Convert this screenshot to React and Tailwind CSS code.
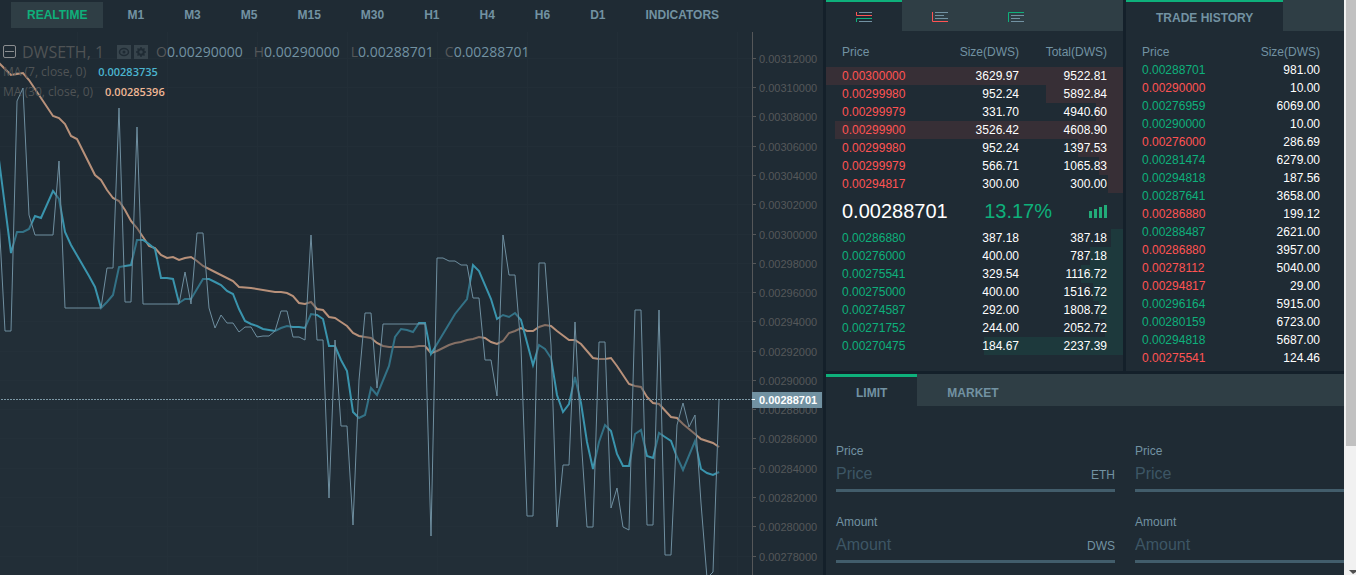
import { useState } from "react"

const intervals = ['REALTIME', 'M1', 'M3', 'M5', 'M15', 'M30', 'H1', 'H4', 'H6', 'D1', 'INDICATORS']

const asks = [
    { price: '0.00300000', size: '3629.97', total: '9522.81', depth: 100 },
    { price: '0.00299980', size: '952.24', total: '5892.84', depth: 26 },
    { price: '0.00299979', size: '331.70', total: '4940.60', depth: 9 },
    { price: '0.00299900', size: '3526.42', total: '4608.90', depth: 97 },
    { price: '0.00299980', size: '952.24', total: '1397.53', depth: 15 },
    { price: '0.00299979', size: '566.71', total: '1065.83', depth: 8 },
    { price: '0.00294817', size: '300.00', total: '300.00', depth: 5 },
]

const bids = [
    { price: '0.00286880', size: '387.18', total: '387.18', depth: 4 },
    { price: '0.00276000', size: '400.00', total: '787.18', depth: 11 },
    { price: '0.00275541', size: '329.54', total: '1116.72', depth: 14 },
    { price: '0.00275000', size: '400.00', total: '1516.72', depth: 10 },
    { price: '0.00274587', size: '292.00', total: '1808.72', depth: 8 },
    { price: '0.00271752', size: '244.00', total: '2052.72', depth: 6 },
    { price: '0.00270475', size: '184.67', total: '2237.39', depth: 47 },
]

const trades = [
    { price: '0.00288701', size: '981.00', up: true },
    { price: '0.00290000', size: '10.00', up: false },
    { price: '0.00276959', size: '6069.00', up: true },
    { price: '0.00290000', size: '10.00', up: true },
    { price: '0.00276000', size: '286.69', up: false },
    { price: '0.00281474', size: '6279.00', up: true },
    { price: '0.00294818', size: '187.56', up: true },
    { price: '0.00287641', size: '3658.00', up: true },
    { price: '0.00286880', size: '199.12', up: false },
    { price: '0.00288487', size: '2621.00', up: true },
    { price: '0.00286880', size: '3957.00', up: false },
    { price: '0.00278112', size: '5040.00', up: false },
    { price: '0.00294817', size: '29.00', up: false },
    { price: '0.00296164', size: '5915.00', up: true },
    { price: '0.00280159', size: '6723.00', up: true },
    { price: '0.00294818', size: '5687.00', up: true },
    { price: '0.00275541', size: '124.46', up: false },
]

const ticks = [
    { y: 59, label: '0.00312000' },
    { y: 88, label: '0.00310000' },
    { y: 117, label: '0.00308000' },
    { y: 147, label: '0.00306000' },
    { y: 176, label: '0.00304000' },
    { y: 205, label: '0.00302000' },
    { y: 235, label: '0.00300000' },
    { y: 264, label: '0.00298000' },
    { y: 293, label: '0.00296000' },
    { y: 322, label: '0.00294000' },
    { y: 352, label: '0.00292000' },
    { y: 381, label: '0.00290000' },
    { y: 410, label: '0.00288000' },
    { y: 439, label: '0.00286000' },
    { y: 469, label: '0.00284000' },
    { y: 498, label: '0.00282000' },
    { y: 527, label: '0.00280000' },
    { y: 557, label: '0.00278000' },
]

const gridColumns = [77, 167, 257, 347, 437, 527, 617, 737]

const priceLine = '-1,218 5,331 11,331 17,101 23,88 29,215 35,235 53,235 59,161 65,308 101,308 107,268 113,268 119,108 125,302 131,302 137,127 143,304 179,304 185,272 191,304 197,233 203,233 209,308 215,328 221,315 227,323 233,323 239,332 245,327 251,327 257,337 263,336 269,336 275,331 281,311 287,311 293,337 299,337 305,340 311,235 317,340 323,340 329,498 335,340 341,426 347,426 353,525 359,380 365,313 371,313 377,388 383,324 425,324 431,536 437,258 443,258 449,261 455,261 461,265 467,265 473,298 479,298 485,360 491,360 497,396 503,235 509,275 515,275 521,347 527,516 533,516 539,263 545,263 551,345 557,527 563,465 569,465 575,322 581,437 587,527 593,527 599,342 605,342 611,508 617,488 623,527 629,530 635,310 641,310 647,525 653,525 659,310 665,555 671,555 677,425 683,403 689,427 695,415 701,503 707,578 713,572 719,400'

const fastLine = '-1,160 11,253 17,232 23,232 29,229 35,216 41,218 53,191 59,199 65,232 71,245 89,276 95,287 101,308 107,302 113,295 119,267 125,266 131,265 137,240 143,240 149,244 155,249 161,278 167,278 173,279 179,303 185,299 191,299 203,279 209,279 215,282 221,285 227,291 233,294 239,309 245,321 251,324 257,326 263,329 269,330 275,331 281,328 287,326 293,327 299,327 305,328 311,314 317,315 323,319 329,346 335,346 341,360 347,371 353,412 359,418 365,415 371,388 377,395 389,366 395,337 401,329 407,330 413,332 419,323 425,323 431,354 437,344 455,314 467,299 473,265 479,271 491,299 497,319 503,315 509,317 515,313 521,320 533,365 539,345 545,349 551,358 557,395 563,412 569,404 575,377 581,403 587,442 593,469 599,442 605,425 611,431 617,454 623,466 629,466 635,434 641,430 647,456 653,458 659,433 665,437 671,441 677,457 683,470 695,441 701,469 707,473 713,475 719,472'

const slowLine = '-1,63 5,69 11,75 17,74 23,73 29,80 41,98 53,116 59,118 65,124 71,136 77,139 95,175 101,180 107,190 113,198 119,201 125,210 131,221 137,228 149,246 155,248 161,255 167,258 173,257 179,260 185,258 191,257 197,261 203,266 215,272 233,281 239,287 251,288 275,292 281,292 287,293 293,296 299,303 305,304 311,302 317,309 323,310 329,317 335,318 341,322 347,326 353,333 359,336 365,337 371,338 377,343 383,346 389,347 413,347 419,346 425,346 431,353 437,351 449,345 455,343 461,342 467,340 473,339 479,337 485,338 491,342 497,344 503,341 509,333 515,331 521,328 527,331 533,331 539,327 545,325 551,326 557,331 569,340 575,340 581,344 593,358 599,359 605,359 611,358 617,366 629,384 635,386 641,387 647,397 653,403 659,404 671,417 677,418 683,424 695,434 701,439 713,443 719,447'

const Toolbar = () => {
    const [active, setActive] = useState('REALTIME')

    return (
        <div className="flex gap-2 h-8 pl-[11px] pt-0.5 shrink-0">
            {intervals.map(name => (
                <button
                    key={name}
                    className={active === name ? 'h-[26px] px-4 text-xs font-bold bg-[#2f3e45] text-[#0eb07b]' : 'h-[26px] px-4 text-xs font-bold text-[#7292a2]'}
                    onClick={() => setActive(name)}
                >
                    {name}
                </button>
            ))}
        </div>
    )
}

const Quote = (props) => {
    return (
        <span className="text-[#555759]">{props.name}<span className="text-[#7292a2]">{props.value}</span></span>
    )
}

const Legend = () => {
    return (
        <div className="absolute left-0 top-0 pt-2.5 pl-[3px] font-['Open_Sans',sans-serif] text-[#4f5355]">
            <div className="flex items-center h-5 text-sm">
                <svg width="13" height="14" fill="none" stroke="#8a8d8f" className="mr-1.5">
                    <rect x="0.5" y="0.5" width="12" height="12" rx="1.5" />
                    <path d="M2 6.5H11" />
                </svg>
                <span className="text-base">DWSETH, 1</span>
                <svg width="31" height="14" className="ml-[13px] mr-2">
                    <path d="M0 0H14V14H0ZM17 0H31V14H17Z" fill="#37444c" />
                    <ellipse cx="7" cy="7" rx="4.5" ry="3.5" fill="none" stroke="#1f2b34" strokeWidth="1.5" />
                    <circle cx="7" cy="7" r="1.5" fill="#1f2b34" />
                    <circle cx="24" cy="7" r="2.8" fill="none" stroke="#1f2b34" strokeWidth="2" />
                    <path d="M24 2V4M24 10V12M19 7H21M27 7H29M20.5 3.5L22 5M26 9L27.5 10.5M27.5 3.5L26 5M22 9L20.5 10.5" stroke="#1f2b34" strokeWidth="1.5" />
                </svg>
                <div className="flex gap-[11px]">
                    <Quote name="O" value="0.00290000" />
                    <Quote name="H" value="0.00290000" />
                    <Quote name="L" value="0.00288701" />
                    <Quote name="C" value="0.00288701" />
                </div>
            </div>
            <div className="flex items-center gap-3 h-5 text-xs">
                MA (7, close, 0)
                <span className="text-[11px] font-semibold text-[#4bb5d0]">0.00283735</span>
            </div>
            <div className="flex items-center gap-3 h-5 text-xs">
                MA (30, close, 0)
                <span className="text-[11px] font-semibold text-[#efb795]">0.00285396</span>
            </div>
        </div>
    )
}

const Chart = () => {
    return (
        <div className="relative flex flex-1 min-h-0 overflow-hidden">
            <svg className="flex-1 min-w-0 h-full">
                <g transform="translate(0 -32)" fill="none">
                    {gridColumns.map(x => <path key={x} d={`M${x}.5 32V1000`} stroke="#222e37" />)}
                    {ticks.map(tick => <path key={tick.y} d={`M0 ${tick.y - 1}.5H2000`} stroke="#222e37" />)}
                    <polyline points={slowLine} stroke="#b8917a" strokeWidth="2" />
                    <polyline points={fastLine} stroke="#3a94ad" strokeWidth="2" />
                    <polygon points={`-1,1000 ${priceLine} 719,1000`} fill="#28353f" fillOpacity="0.35" />
                    <polyline points={priceLine} stroke="#6f8fa0" />
                    <path d="M1 399.5H2000" stroke="#7d98a5" strokeDasharray="2 1" />
                </g>
            </svg>
            <svg className="w-[71px] h-full shrink-0 font-['Liberation_Sans',sans-serif] text-[11px]">
                <g transform="translate(0 -32)">
                    <path d="M0.5 32V1000" stroke="#555759" />
                    {ticks.map(tick => (
                        <g key={tick.y}>
                            <path d={`M1 ${tick.y - 1}.5H4`} stroke="#555759" />
                            <text x="7" y={tick.y + 4} fill="#55585a">{tick.label}</text>
                        </g>
                    ))}
                    <rect y="392" width="70" height="16" fill="#7292a2" />
                    <path d="M0 399.5H3" stroke="#fff" />
                    <text x="7" y="404" fill="#fff" fontWeight="bold">0.00288701</text>
                </g>
            </svg>
            <Legend />
        </div>
    )
}

const BookIcon = (props) => {
    return (
        <svg width="16" height="10" fill="none">
            {props.type === 'both' && (
                <>
                    <path d="M3 0.5H16M3 9.5H16" stroke="#7292a2" />
                    <path d="M0.5 0V3.5H16" stroke="#ff5353" />
                    <path d="M0.5 10V6.5H16" stroke="#0eb07b" />
                </>
            )}
            {props.type === 'asks' && (
                <>
                    <path d="M3 0.5H16M3 3.5H12M3 6.5H16" stroke="#7292a2" />
                    <path d="M0.5 0V9.5H16" stroke="#ff5353" />
                </>
            )}
            {props.type === 'bids' && (
                <>
                    <path d="M3 3.5H16M3 6.5H12M3 9.5H16" stroke="#7292a2" />
                    <path d="M0.5 10V0.5H16" stroke="#0eb07b" />
                </>
            )}
        </svg>
    )
}

const BookRows = (props) => {
    return (
        <table className="w-full table-fixed text-xs text-white">
            {props.head && (
                <thead>
                    <tr className="h-9 text-[#7292a2]">
                        <th className="pl-4 pt-1.5 text-left font-normal">Price</th>
                        <th className="pt-1.5 text-right font-normal">Size(DWS)</th>
                        <th className="w-[104px] pr-4 pt-1.5 text-right font-normal">Total(DWS)</th>
                    </tr>
                </thead>
            )}
            <tbody>
                {props.rows.map(row => (
                    <tr
                        key={row.price + row.total}
                        className="h-[18px]"
                        style={{ background: `linear-gradient(to left, ${props.shade} ${row.depth}%, transparent ${row.depth}%)` }}
                    >
                        <td className={props.color}>{row.price}</td>
                        <td className="text-right">{row.size}</td>
                        <td className="w-[104px] pr-4 text-right">{row.total}</td>
                    </tr>
                ))}
            </tbody>
        </table>
    )
}

const OrderBook = () => {
    const [type, setType] = useState('both')

    return (
        <section className="w-[297px] bg-[#1f2b34]">
            <div className="flex h-[31px] bg-[#2f3e45]">
                {['both', 'asks', 'bids'].map(name => (
                    <button
                        key={name}
                        aria-label={name}
                        className={type === name ? 'flex items-center justify-center w-19 pt-px border-t-2 border-[#0eb07b] bg-[#1f2b34]' : 'flex items-center justify-center w-19 pt-px border-t-2 border-transparent'}
                        onClick={() => setType(name)}
                    >
                        <BookIcon type={name} />
                    </button>
                ))}
            </div>
            <BookRows head rows={asks} color="pl-4 text-[#ff5353]" shade="#372f36" />
            <div className="flex items-center h-9 px-4 text-xl text-white">
                0.00288701
                <span className="ml-auto text-[#0eb07b]">13.17%</span>
                <svg width="18" height="13" className="ml-[37px]" fill="#22ab78">
                    <path d="M0 6H3V13H0ZM5 4H8V13H5ZM10 2H13V13H10ZM15 0H18V13H15Z" />
                </svg>
            </div>
            <BookRows rows={bids} color="pl-4 text-[#0eb07b]" shade="#1d393c" />
        </section>
    )
}

const TradeHistory = () => {
    return (
        <section className="w-[218px] bg-[#1f2b34]">
            <div className="flex h-[31px] bg-[#2f3e45]">
                <button className="px-[30px] pt-0.5 border-t-2 border-[#0eb07b] bg-[#1f2b34] text-xs font-bold text-[#7292a2]">TRADE HISTORY</button>
            </div>
            <table className="w-full table-fixed text-xs text-white">
                <thead>
                    <tr className="h-[30px] text-[#7292a2]">
                        <th className="pl-4 pt-3 text-left font-normal">Price</th>
                        <th className="pr-6 pt-3 text-right font-normal">Size(DWS)</th>
                    </tr>
                </thead>
                <tbody>
                    {trades.map((trade, i) => (
                        <tr key={i} className="h-[18px]">
                            <td className={trade.up ? 'pl-4 text-[#0eb07b]' : 'pl-4 text-[#ff5353]'}>{trade.price}</td>
                            <td className="pr-6 text-right">{trade.size}</td>
                        </tr>
                    ))}
                </tbody>
            </table>
        </section>
    )
}

const Field = (props) => {
    return (
        <div className="text-xs text-[#7292a2]">
            <label htmlFor={props.id} className="block">{props.label}</label>
            <div className="flex items-center h-[33px] border-b-3 border-[#425d6b]">
                <input id={props.id} placeholder={props.label} className="flex-1 min-w-0 text-base text-white placeholder:text-[#3d5665] outline-none" />
                {props.unit && <span className="pt-0.5">{props.unit}</span>}
            </div>
        </div>
    )
}

const OrderForm = () => {
    const [tab, setTab] = useState('LIMIT')

    return (
        <section className="flex-1 bg-[#1f2b34]">
            <div className="flex h-8 bg-[#2f3e45]">
                {['LIMIT', 'MARKET'].map(name => (
                    <button
                        key={name}
                        className={tab === name ? 'px-[30px] pt-0.5 border-t-3 border-[#0eb07b] bg-[#1f2b34] text-xs font-bold text-[#7292a2]' : 'px-[30px] pt-0.5 border-t-3 border-transparent text-xs font-bold text-[#7292a2]'}
                        onClick={() => setTab(name)}
                    >
                        {name}
                    </button>
                ))}
            </div>
            <form className="grid grid-cols-[279px_1fr] gap-x-5 gap-y-[22px] pt-[37px] pl-2.5">
                <Field id="buy-price" label="Price" unit="ETH" />
                <Field id="sell-price" label="Price" />
                <Field id="buy-amount" label="Amount" unit="DWS" />
                <Field id="sell-amount" label="Amount" />
            </form>
        </section>
    )
}

const ScrollTrack = () => {
    return (
        <div className="flex flex-col justify-between w-3 pl-0.5 shrink-0 bg-[#f1f1f1]">
            <div className="h-[446px] bg-[#c1c1c1]" />
            <svg width="10" height="8">
                <path d="M3 3H10V5L7 7Z" fill="#505050" />
            </svg>
        </div>
    )
}

const App = () => {
    return (
        <div className="flex h-screen overflow-hidden bg-[#14202a] font-['Liberation_Sans',Arial,sans-serif]">
            <main className="flex flex-col flex-1 min-w-0 bg-[#1f2b34]">
                <Toolbar />
                <Chart />
            </main>
            <div className="flex flex-col gap-[3px] ml-[3px] shrink-0">
                <div className="flex gap-[3px] h-[371px]">
                    <OrderBook />
                    <TradeHistory />
                </div>
                <OrderForm />
            </div>
            <ScrollTrack />
        </div>
    )
}

export default App;
